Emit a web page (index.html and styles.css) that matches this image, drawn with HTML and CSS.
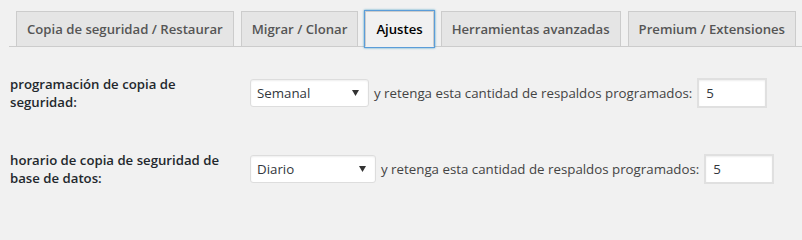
FILE: index.html
```html
<!DOCTYPE html>
<html lang="es">
<head>
<meta charset="utf-8">
<title>Ajustes</title>
<link rel="stylesheet" href="styles.css">
</head>
<body>
<div class="page">
  <nav class="tabs">
    <a class="tab" href="#">Copia de seguridad / Restaurar</a>
    <a class="tab" href="#">Migrar / Clonar</a>
    <a class="tab tab-active" href="#">Ajustes</a>
    <a class="tab" href="#">Herramientas avanzadas</a>
    <a class="tab" href="#">Premium / Extensiones</a>
  </nav>
  <div class="form">
    <div class="row">
      <label class="label">programación de copia de seguridad:</label>
      <div class="controls">
        <span class="select-wrap">
          <select class="select select-1"><option>Semanal</option></select>
          <svg class="arrow" width="7" height="6" viewBox="0 0 7 6"><polygon points="0,0 7,0 3.5,6" fill="#333"/></svg>
        </span>
        <span class="text">y retenga esta cantidad de respaldos programados:</span>
        <input class="num" type="text" value="5">
      </div>
    </div>
    <div class="row row-2">
      <label class="label">horario de copia de seguridad de base de datos:</label>
      <div class="controls">
        <span class="select-wrap">
          <select class="select select-2"><option>Diario</option></select>
          <svg class="arrow" width="7" height="6" viewBox="0 0 7 6"><polygon points="0,0 7,0 3.5,6" fill="#333"/></svg>
        </span>
        <span class="text">y retenga esta cantidad de respaldos programados:</span>
        <input class="num" type="text" value="5">
      </div>
    </div>
  </div>
</div>
</body>
</html>
```
FILE: styles.css
```css
html, body {
  margin: 0;
  padding: 0;
  background: #f1f1f1;
}
body {
  font-family: "Open Sans", "Noto Sans", sans-serif;
  font-size: 13.3px;
  color: #444;
}
.page {
  padding-left: 9px;
}
.tabs {
  display: flex;
  align-items: flex-end;
  padding-top: 11px;
  border-bottom: 1px solid #ccc;
}
.tab {
  display: block;
  margin-left: 7px;
  padding: 5px 10px;
  border: 1px solid #ccc;
  border-bottom: none;
  background: #e5e5e5;
  color: #555;
  font-weight: 600;
  font-size: 13.15px;
  line-height: 24px;
  text-decoration: none;
  white-space: nowrap;
}
.tab-active {
  background: #f1f1f1;
  color: #000;
  border-bottom: 1px solid #f1f1f1;
  margin-bottom: -1px;
  box-shadow: 0 0 0 1px #5b9dd9, 0 0 2px 1px rgba(30, 140, 190, .8);
}
.form {
  padding-top: 8px;
}
.row {
  display: flex;
  align-items: center;
  padding: 20px 0 19px;
}
.row-2 {
  padding-top: 21px;
}
.label {
  width: 225px;
  margin-left: 1px;
  margin-right: 15px;
  font-weight: 600;
  font-size: 13.2px;
  line-height: 18px;
  color: #23282d;
}
.controls {
  display: flex;
  align-items: center;
  gap: 5px;
}
.select-wrap {
  position: relative;
  display: block;
}
.select {
  -webkit-appearance: none;
  appearance: none;
  display: block;
  height: 28px;
  margin: 0;
  padding: 0 24px 0 6px;
  border: 1px solid #ddd;
  border-radius: 3px;
  background: #fff;
  box-shadow: inset 0 1px 2px rgba(0, 0, 0, .07);
  font-family: inherit;
  font-size: 13.3px;
  color: #32373c;
  outline: none;
}
.select-1 { width: 119px; }
.select-2 { width: 126px; }
.arrow {
  position: absolute;
  right: 10px;
  top: 11px;
}
.text {
  white-space: nowrap;
  color: #444;
}
.num {
  box-sizing: border-box;
  width: 70px;
  height: 30px;
  margin: 0;
  padding: 0 7px;
  border: 2px solid #e0e0e0;
  background: #fff;
  box-shadow: inset 0 1px 2px rgba(0, 0, 0, .07);
  font-family: inherit;
  font-size: 13.3px;
  color: #32373c;
  outline: none;
}
```
